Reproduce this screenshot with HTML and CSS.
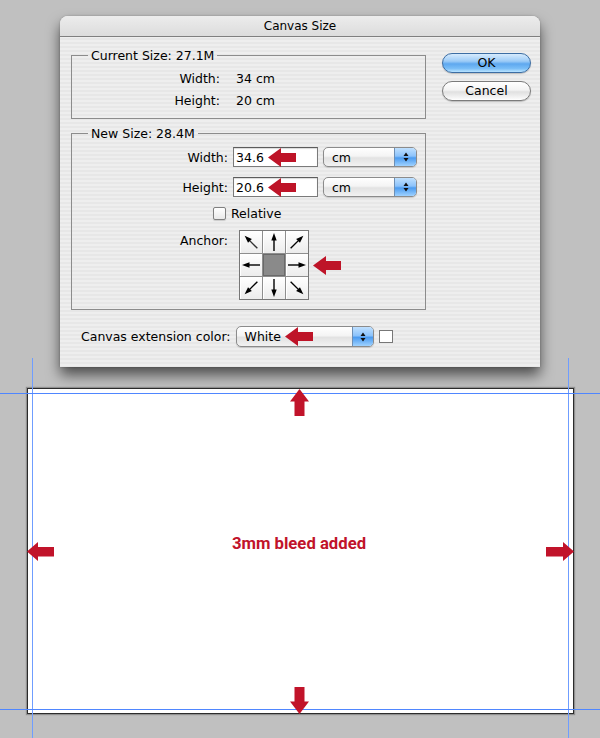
FILE: index.html
```html
<!DOCTYPE html>
<html>
<head>
<meta charset="utf-8">
<title>Canvas Size</title>
<link rel="stylesheet" href="styles.css">
</head>
<body>
<div class="dialog">
  <div class="titlebar">Canvas Size</div>
  <div class="dlg-body">
    <div class="main-col">
      <fieldset class="group current">
        <legend>Current Size: 27.1M</legend>
        <div class="kv"><span class="k">Width:</span><span class="v">34 cm</span></div>
        <div class="kv"><span class="k">Height:</span><span class="v">20 cm</span></div>
      </fieldset>
      <fieldset class="group newsize">
        <legend>New Size: 28.4M</legend>
        <div class="frow">
          <span class="flabel">Width:</span>
          <div class="input">34.6<svg class="note-arrow" viewBox="0 0 28 19" width="28" height="19"><polygon points="0,9.5 13,0 13,5 28,5 28,14 13,14 13,19"/></svg></div>
          <div class="select unit"><span class="sel-text">cm</span><span class="stepper"><svg viewBox="0 0 8 12" width="8" height="12"><path d="M4 1.5L6.5 5H1.5Z M4 10.5L6.5 7H1.5Z"/></svg></span></div>
        </div>
        <div class="frow">
          <span class="flabel">Height:</span>
          <div class="input">20.6<svg class="note-arrow" viewBox="0 0 28 19" width="28" height="19"><polygon points="0,9.5 13,0 13,5 28,5 28,14 13,14 13,19"/></svg></div>
          <div class="select unit"><span class="sel-text">cm</span><span class="stepper"><svg viewBox="0 0 8 12" width="8" height="12"><path d="M4 1.5L6.5 5H1.5Z M4 10.5L6.5 7H1.5Z"/></svg></span></div>
        </div>
        <div class="check-row"><span class="checkbox"></span><span>Relative</span></div>
        <div class="anchor-row">
          <span class="flabel anchor-label">Anchor:</span>
          <div class="anchor-grid">
            <div class="cell"><svg viewBox="0 0 22 22"><g transform="rotate(-45 11 11)" class="faint"><path d="M11 20V8"/><polygon points="11,2 8.3,9.5 13.7,9.5"/></g></svg></div>
            <div class="cell"><svg viewBox="0 0 22 22"><g><path d="M11 20V8"/><polygon points="11,2 8.3,9.5 13.7,9.5"/></g></svg></div>
            <div class="cell"><svg viewBox="0 0 22 22"><g transform="rotate(45 11 11)"><path d="M11 20V8"/><polygon points="11,2 8.3,9.5 13.7,9.5"/></g></svg></div>
            <div class="cell"><svg viewBox="0 0 22 22"><g transform="rotate(-90 11 11)"><path d="M11 20V8"/><polygon points="11,2 8.3,9.5 13.7,9.5"/></g></svg></div>
            <div class="cell center"></div>
            <div class="cell"><svg viewBox="0 0 22 22"><g transform="rotate(90 11 11)"><path d="M11 20V8"/><polygon points="11,2 8.3,9.5 13.7,9.5"/></g></svg></div>
            <div class="cell"><svg viewBox="0 0 22 22"><g transform="rotate(-135 11 11)"><path d="M11 20V8"/><polygon points="11,2 8.3,9.5 13.7,9.5"/></g></svg></div>
            <div class="cell"><svg viewBox="0 0 22 22"><g transform="rotate(180 11 11)"><path d="M11 20V8"/><polygon points="11,2 8.3,9.5 13.7,9.5"/></g></svg></div>
            <div class="cell"><svg viewBox="0 0 22 22"><g transform="rotate(135 11 11)"><path d="M11 20V8"/><polygon points="11,2 8.3,9.5 13.7,9.5"/></g></svg></div>
          </div>
          <svg class="note-arrow anchor-arrow" viewBox="0 0 28 19" width="28" height="19"><polygon points="0,9.5 13,0 13,5 28,5 28,14 13,14 13,19"/></svg>
        </div>
      </fieldset>
      <div class="ext-row">
        <span class="ext-label">Canvas extension color:</span>
        <div class="select ext"><span class="sel-text">White</span><svg class="note-arrow" viewBox="0 0 28 19" width="28" height="19"><polygon points="0,9.5 13,0 13,5 28,5 28,14 13,14 13,19"/></svg><span class="stepper"><svg viewBox="0 0 8 12" width="8" height="12"><path d="M4 1.5L6.5 5H1.5Z M4 10.5L6.5 7H1.5Z"/></svg></span></div>
        <span class="swatch"></span>
      </div>
    </div>
    <div class="buttons">
      <div class="btn primary">OK</div>
      <div class="btn">Cancel</div>
    </div>
  </div>
</div>

<div class="doc">
  <div class="bleed-text">3mm bleed added</div>
  <svg class="doc-arrow a-top" viewBox="0 0 19 27" width="19" height="27"><polygon points="9.5,0 19,12.5 14.5,12.5 14.5,27 4.5,27 4.5,12.5 0,12.5"/></svg>
  <svg class="doc-arrow a-bottom" viewBox="0 0 19 27" width="19" height="27"><polygon points="9.5,27 19,14.5 14.5,14.5 14.5,0 4.5,0 4.5,14.5 0,14.5"/></svg>
  <svg class="doc-arrow a-left" viewBox="0 0 27 19" width="27" height="19"><polygon points="0,9.5 11,0 11,5 27,5 27,14.5 11,14.5 11,19"/></svg>
  <svg class="doc-arrow a-right" viewBox="0 0 28 19" width="28" height="19"><polygon points="28,9.5 17,0 17,5 0,5 0,14.5 17,14.5 17,19"/></svg>
</div>

<div class="guide gv g-left"></div>
<div class="guide gv g-right"></div>
<div class="guide gh g-top"></div>
<div class="guide gh g-bottom"></div>
</body>
</html>
```

FILE: styles.css
```css
html, body {
  margin: 0;
  padding: 0;
}
body {
  position: relative;
  width: 600px;
  height: 738px;
  overflow: hidden;
  background: #c0c0c0;
  font-family: "DejaVu Sans", "Liberation Sans", sans-serif;
  font-size: 12.5px;
  color: #000;
  padding-top: 16px;
  box-sizing: border-box;
}

/* ---------- dialog ---------- */
.dialog {
  margin-left: 60px;
  width: 480px;
  border-radius: 8px 8px 0 0;
  background: repeating-linear-gradient(#eeeeee 0 2px, #e7e7e7 2px 4px);
  box-shadow: 0 8px 14px rgba(0, 0, 0, 0.6), 0 0 2px rgba(0,0,0,0.25);
}
.titlebar {
  height: 21px;
  line-height: 20px;
  box-sizing: border-box;
  text-align: center;
  font-size: 12px;
  border-radius: 8px 8px 0 0;
  background: linear-gradient(#ececec, #dcdcdc);
  border-bottom: 1px solid #7f7f7f;
}
.dlg-body {
  display: flex;
  gap: 16px;
  padding: 11px 9px 20px 11px;
}
.main-col {
  width: 355px;
  display: flex;
  flex-direction: column;
}
.group {
  margin: 0;
  padding: 0;
  border: 1px solid #8c8c8c;
  min-width: 0;
}
.group legend {
  margin-left: 16px;
  padding: 0 3px;
  line-height: 15px;
}
.current {
  padding: 5px 0 6px;
}
.kv {
  display: grid;
  grid-template-columns: 148px auto;
  column-gap: 16px;
  height: 22px;
  line-height: 22px;
}
.kv .k {
  text-align: right;
}

.newsize {
  margin-top: 7px;
  padding: 6px 0 9px;
}
.frow {
  display: flex;
  align-items: center;
  height: 20px;
  margin-bottom: 10px;
}
.flabel {
  width: 156px;
  text-align: right;
  margin-right: 5px;
  flex: none;
}
.input {
  box-sizing: border-box;
  width: 85px;
  height: 20px;
  border: 1px solid #7a7a7a;
  border-top-color: #5c5c5c;
  background: #fff;
  padding-left: 2px;
  display: flex;
  align-items: center;
  box-shadow: inset 0 1px 1px rgba(0,0,0,0.15);
}
.note-arrow {
  fill: #be1428;
  flex: none;
  margin-left: 4px;
}
.select {
  box-sizing: border-box;
  height: 20px;
  border: 1px solid #8b8b8b;
  border-radius: 5px;
  background: linear-gradient(#ffffff 0%, #f4f4f4 45%, #e2e2e2 55%, #f2f2f2 100%);
  display: flex;
  align-items: center;
  position: relative;
  padding-left: 8px;
  box-shadow: 0 1px 1px rgba(0,0,0,0.15);
}
.unit {
  width: 94px;
  margin-left: 5px;
}
.stepper {
  margin-left: auto;
  width: 21px;
  height: 18px;
  border-radius: 0 4px 4px 0;
  background: linear-gradient(#bfe0ff 0%, #8cc3fb 45%, #4b9bf0 55%, #9fd2ff 100%);
  border-left: 1px solid #6d8fb5;
  display: flex;
  align-items: center;
  justify-content: center;
  flex: none;
}
.stepper svg {
  fill: #111;
}
.check-row {
  display: flex;
  align-items: center;
  height: 17px;
  margin-top: -2px;
  padding-left: 141px;
  gap: 5px;
}
.checkbox {
  width: 13px;
  height: 13px;
  box-sizing: border-box;
  border: 1px solid #808080;
  border-radius: 2px;
  background: linear-gradient(#ffffff, #e9e9e9);
  box-shadow: 0 1px 1px rgba(0,0,0,0.15);
}
.anchor-row {
  display: flex;
  align-items: flex-start;
  margin-top: 8px;
}
.anchor-label {
  width: 156px;
  margin-right: 11px;
  line-height: 20px;
  margin-top: 1px;
}
.anchor-grid {
  display: grid;
  grid-template-columns: repeat(3, 22px);
  grid-template-rows: repeat(3, 22px);
  gap: 1px;
  background: #8e8e8e;
  border: 1px solid #777;
}
.cell {
  background: linear-gradient(#ffffff, #ececec);
  box-shadow: inset 1px 1px 0 #ffffff;
}
.cell svg {
  width: 22px;
  height: 22px;
  display: block;
}
.cell path {
  stroke: #000;
  stroke-width: 1.4;
}
.cell polygon {
  fill: #000;
}
.cell .faint path { stroke: #333; }
.cell.center {
  background: #8a8a8a;
  box-shadow: inset 0 0 0 1px #6a6a6a;
}
.anchor-arrow {
  margin-left: 4px;
  margin-top: 26px;
}
.ext-row {
  display: flex;
  align-items: center;
  margin-top: 16px;
  padding-left: 10px;
  height: 21px;
}
.ext-label {
  margin-right: 5px;
}
.ext {
  width: 138px;
  height: 21px;
}
.ext .stepper {
  height: 19px;
  width: 20px;
}
.swatch {
  width: 14px;
  height: 13px;
  box-sizing: border-box;
  border: 1px solid #777;
  background: #fff;
  margin-left: 5px;
}

.buttons {
  margin-top: 5px;
  display: flex;
  flex-direction: column;
  gap: 8px;
}
.btn {
  width: 89px;
  height: 20px;
  box-sizing: border-box;
  border-radius: 10px;
  border: 1px solid #7b7b7b;
  text-align: center;
  line-height: 18px;
  background: linear-gradient(#ffffff 0%, #f3f3f3 45%, #e0e0e0 55%, #f6f6f6 90%, #ffffff 100%);
  box-shadow: 0 1px 1px rgba(0,0,0,0.2);
}
.btn.primary {
  border-color: #3c6da3;
  background: linear-gradient(#d6ebfd 0%, #9ccbf7 40%, #5ea8ef 55%, #79bdf7 80%, #b9e3ff 100%);
}

/* ---------- document ---------- */
.doc {
  position: relative;
  margin: 21px 0 0 27px;
  width: 542px;
  height: 308px;
  background: #fff;
  border: 1px solid #2b2b2b;
  box-shadow: 0 0 1px 1px rgba(0,0,0,0.25);
  display: flex;
  align-items: center;
  justify-content: center;
  padding: 0 3px 16px 0;
  box-sizing: content-box;
}
.bleed-text {
  font-family: Roboto, "Liberation Sans", sans-serif;
  font-weight: 700;
  font-size: 16.7px;
  color: #c1132a;
}
.doc-arrow {
  position: absolute;
  fill: #c1132a;
  z-index: 3;
}
.a-top { left: 262px; top: 0; }
.a-bottom { left: 262px; top: 298px; }
.a-left { left: -1px; top: 153px; }
.a-right { left: 518px; top: 153px; }

/* ---------- guides ---------- */
.guide {
  position: absolute;
  z-index: 2;
}
.gv {
  top: 358px;
  bottom: 0;
  width: 1px;
  background: #6f9dff;
}
.g-left { left: 32px; }
.g-right { left: 568px; }
.gh {
  left: 0;
  width: 600px;
  height: 0;
  border-top: 1px solid #4f86ff;
}
.g-top { top: 393px; }
.g-bottom { top: 709px; }
```
